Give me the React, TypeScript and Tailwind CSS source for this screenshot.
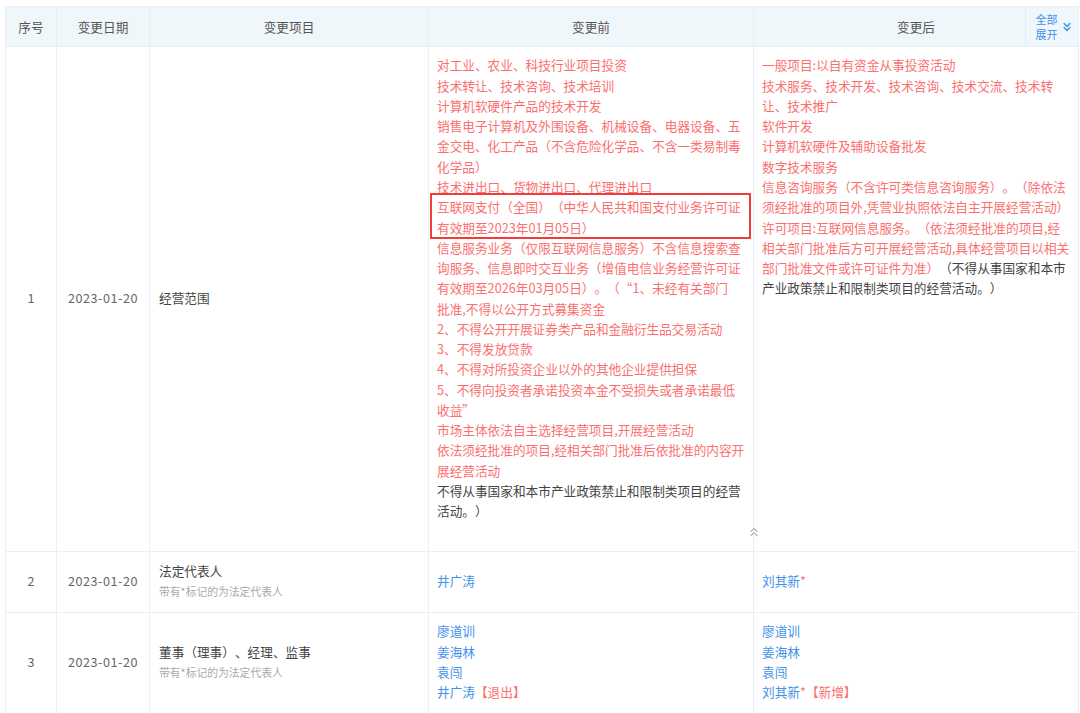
import React from 'react';
import { ChevronsDown, ChevronsUp } from 'lucide-react';

const RED = 'text-[#fb6f6f]';

const Lines = ({ lines, className }: { lines: string[]; className?: string }) => (
  <>
    {lines.map((line) => (
      <div key={line} className={`whitespace-nowrap ${className || ''}`}>
        {line}
      </div>
    ))}
  </>
);

const head = 'border border-[#e6f0f8] align-middle font-normal pt-[1px]';
const cell = 'border border-[#e6f0f8] align-middle font-normal pb-[2px]';
const textCell = 'border border-[#e6f0f8] align-top px-[8px] pt-[8.4px] pb-[9px]';
const date = 'tracking-[0.5px]';

const Title = ({ text }: { text: string }) => (
  <>
    <div className="text-[#444]">{text}</div>
    <div className="text-[10.8px] leading-[20px] text-[#aaa]">带有*标记的为法定代表人</div>
  </>
);

export default function App() {
  return (
    <div
      className="h-[713px] overflow-hidden bg-white pl-[5px] pt-[6px] text-[12.67px] leading-[20.27px] text-[#444] [text-spacing-trim:space-all]"
      style={{ fontFamily: '"Noto Sans CJK SC", "Noto Sans", sans-serif' }}
    >
      <table className="w-[1073px] table-fixed border-collapse">
        <colgroup>
          <col className="w-[51px]" />
          <col className="w-[93px]" />
          <col className="w-[279px]" />
          <col className="w-[325px]" />
          <col className="w-[325px]" />
        </colgroup>
        <thead>
          <tr className="h-[40px] bg-[#f0f7fb] text-center text-[#555]">
            <th className={head}>序号</th>
            <th className={head}>变更日期</th>
            <th className={head}>变更项目</th>
            <th className={head}>变更前</th>
            <th className={`${head} relative`}>
              变更后
              <div className="absolute right-0 top-0 flex h-full w-[53px] items-center border-l border-[#e1ebf2] pl-[9.5px] text-[#3f92ea]">
                <div className="text-[11px] leading-[15px]">全部<br />展开</div>
                <ChevronsDown className="ml-[2px] h-[14px] w-[14px]" strokeWidth={2.4} />
              </div>
            </th>
          </tr>
        </thead>
        <tbody>
          <tr className="h-[505px]">
            <td className={`${cell} text-center text-[#666]`}>1</td>
            <td className={`${cell} ${date} text-center text-[#666]`}>2023-01-20</td>
            <td className={`${cell} px-[9px] text-[#444]`}>经营范围</td>
            <td className={`${textCell} relative`}>
              <Lines
                className={RED}
                lines={[
                  '对工业、农业、科技行业项目投资',
                  '技术转让、技术咨询、技术培训',
                  '计算机软硬件产品的技术开发',
                  '销售电子计算机及外围设备、机械设备、电器设备、五',
                  '金交电、化工产品（不含危险化学品、不含一类易制毒',
                  '化学品）',
                  '技术进出口、货物进出口、代理进出口',
                ]}
              />
              <div className="relative">
                <Lines
                  className={RED}
                  lines={['互联网支付（全国）（中华人民共和国支付业务许可证', '有效期至2023年01月05日）']}
                />
                <div className="absolute -left-[7px] -right-[6px] -top-[4px] -bottom-[1px] border-2 border-[#f23b3b]" />
              </div>
              <Lines
                className={RED}
                lines={[
                  '信息服务业务（仅限互联网信息服务）不含信息搜索查',
                  '询服务、信息即时交互业务（增值电信业务经营许可证',
                  '有效期至2026年03月05日）。（“1、未经有关部门',
                  '批准,不得以公开方式募集资金',
                  '2、不得公开开展证券类产品和金融衍生品交易活动',
                  '3、不得发放贷款',
                  '4、不得对所投资企业以外的其他企业提供担保',
                  '5、不得向投资者承诺投资本金不受损失或者承诺最低',
                  '收益”',
                  '市场主体依法自主选择经营项目,开展经营活动',
                  '依法须经批准的项目,经相关部门批准后依批准的内容开',
                  '展经营活动',
                ]}
              />
              <Lines lines={['不得从事国家和本市产业政策禁止和限制类项目的经营', '活动。）']} />
              <ChevronsUp className="absolute bottom-[12px] right-[-8px] h-[14px] w-[14px] text-[#a9b4b8]" strokeWidth={2} />
            </td>
            <td className={textCell}>
              <Lines
                className={RED}
                lines={[
                  '一般项目:以自有资金从事投资活动',
                  '技术服务、技术开发、技术咨询、技术交流、技术转',
                  '让、技术推广',
                  '软件开发',
                  '计算机软硬件及辅助设备批发',
                  '数字技术服务',
                  '信息咨询服务（不含许可类信息咨询服务）。（除依法',
                  '须经批准的项目外,凭营业执照依法自主开展经营活动）',
                  '许可项目:互联网信息服务。（依法须经批准的项目,经',
                  '相关部门批准后方可开展经营活动,具体经营项目以相关',
                ]}
              />
              <div className="whitespace-nowrap">
                <span className={RED}>部门批准文件或许可证件为准）</span>（不得从事国家和本市
              </div>
              <div className="whitespace-nowrap">产业政策禁止和限制类项目的经营活动。）</div>
            </td>
          </tr>
          <tr className="h-[61px]">
            <td className={`${cell} text-center text-[#666]`}>2</td>
            <td className={`${cell} ${date} text-center text-[#666]`}>2023-01-20</td>
            <td className={`${cell} px-[9px]`}><Title text="法定代表人" /></td>
            <td className={`${cell} px-[8px] text-[#3f92ea]`}>井广涛</td>
            <td className={`${cell} px-[8px] text-[#3f92ea]`}>
              刘其新<span className={RED}>*</span>
            </td>
          </tr>
          <tr className="h-[101px]">
            <td className={`${cell} text-center text-[#666]`}>3</td>
            <td className={`${cell} ${date} text-center text-[#666]`}>2023-01-20</td>
            <td className={`${cell} px-[9px]`}><Title text="董事（理事）、经理、监事" /></td>
            <td className={`${cell} px-[8px] text-[#3f92ea]`}>
              <div>廖道训</div>
              <div>姜海林</div>
              <div>袁闯</div>
              <div>井广涛<span className={RED}>【退出】</span></div>
            </td>
            <td className={`${cell} px-[8px] text-[#3f92ea]`}>
              <div>廖道训</div>
              <div>姜海林</div>
              <div>袁闯</div>
              <div>刘其新<span className={RED}>*【新增】</span></div>
            </td>
          </tr>
        </tbody>
      </table>
    </div>
  );
}
